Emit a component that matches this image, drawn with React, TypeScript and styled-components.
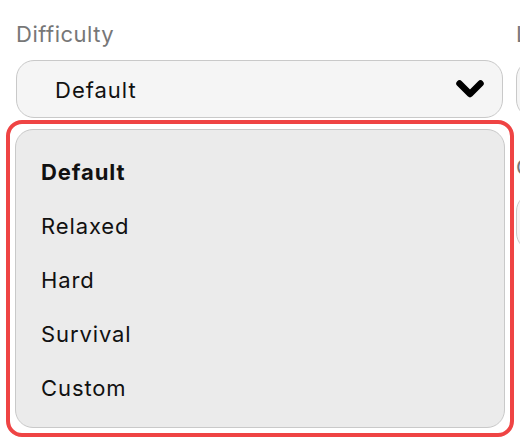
import styled, { createGlobalStyle } from "styled-components"
import { useState } from "react"

const GlobalStyle = createGlobalStyle`
    html, body {
        margin: 0;
        padding: 0;
        background: #ffffff;
        overflow: hidden;
    }
    body {
        font-family: Inter, "Noto Sans", "DejaVu Sans", sans-serif;
    }
`

const Page = styled.div`
    display: grid;
    grid-template-columns: 487px 487px;
    column-gap: 13px;
    padding: 21px 0 0 16px;
    width: 1100px;
`

const Column = styled.div`
    display: flex;
    flex-direction: column;
`

const Label = styled.div<{ $spaced?: boolean }>`
    font-size: 22px;
    line-height: 26px;
    color: #777777;
    letter-spacing: 0.5px;
    margin-top: ${p => (p.$spaced ? "36px" : "0")};
    margin-bottom: 13px;
`

const SelectBox = styled.button`
    display: flex;
    align-items: center;
    justify-content: space-between;
    box-sizing: border-box;
    width: 100%;
    height: 58px;
    padding: 2px 17px 0 38px;
    background: #f5f5f5;
    border: 1.5px solid #c9c9c9;
    border-radius: 18px;
    font-family: inherit;
    font-size: 22px;
    letter-spacing: 1px;
    color: #111111;
    cursor: pointer;
    text-align: left;
`

const Chevron = styled.svg`
    width: 30px;
    height: 21px;
    flex: none;
    margin-top: -2px;
`

const FocusRing = styled.div`
    margin: 2px -11px 0 -10px;
    padding: 5px;
    border: 4.5px solid #ef4444;
    border-radius: 16px;
`

const ListBox = styled.ul`
    list-style: none;
    margin: 0;
    padding: 15px 0 12px;
    background: #ebebeb;
    border: 1.5px solid #c9c9c9;
    border-radius: 18px;
`

const Option = styled.li<{ $selected?: boolean }>`
    display: flex;
    align-items: center;
    height: 54px;
    padding-left: 25px;
    font-size: 22px;
    letter-spacing: 0.9px;
    font-weight: ${p => (p.$selected ? 700 : 400)};
    color: #111111;
    cursor: pointer;
`

function ChevronDown() {
    return <Chevron viewBox="0 0 30 21">
        <path d="M4.5 4.5 L15 15 L25.5 4.5" fill="none" stroke="#000" strokeWidth="6.5" strokeLinecap="round" strokeLinejoin="round" />
    </Chevron>
}

const levels = ["Default", "Relaxed", "Hard", "Survival", "Custom"]

function App() {
    const [difficulty, setDifficulty] = useState("Default")
    const [open, setOpen] = useState(true)

    return <>
        <GlobalStyle />
        <Page>
            <Column>
                <Label>Difficulty</Label>
                <SelectBox onClick={() => setOpen(o => !o)}>
                    <span>{difficulty}</span>
                    <ChevronDown />
                </SelectBox>
                {open && <FocusRing>
                    <ListBox>
                        {levels.map(level =>
                            <Option key={level} $selected={level === difficulty} onClick={() => setDifficulty(level)}>
                                {level}
                            </Option>
                        )}
                    </ListBox>
                </FocusRing>}
            </Column>
            <Column>
                <Label>Level</Label>
                <SelectBox>
                    <span>Survival</span>
                    <ChevronDown />
                </SelectBox>
                <Label $spaced>Cheats</Label>
                <SelectBox>
                    <span>Off</span>
                    <ChevronDown />
                </SelectBox>
            </Column>
        </Page>
    </>
}

export default App
